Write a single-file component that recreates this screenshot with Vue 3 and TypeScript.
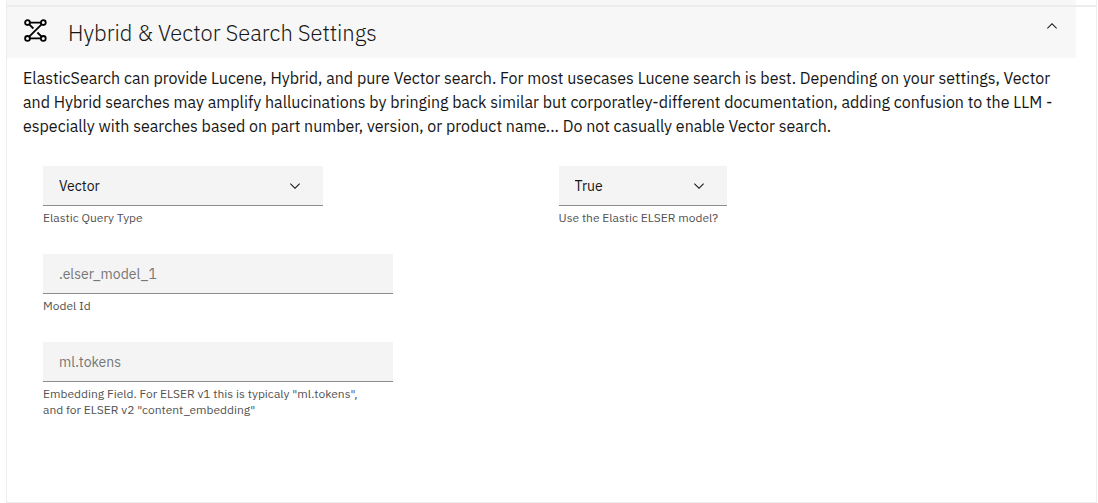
<script setup lang="ts">
import { ref } from 'vue'

const queryType = ref<string>('Vector')
const useElser = ref<string>('True')
const modelId = ref<string>('')
const embeddingField = ref<string>('')
const open = ref<boolean>(true)

const intro: string[] = [
  'ElasticSearch can provide Lucene, Hybrid, and pure Vector search. For most usecases Lucene search is best. Depending on your settings, Vector',
  'and Hybrid searches may amplify hallucinations by bringing back similar but corporatley-different documentation, adding confusion to the LLM -',
  'especially with searches based on part number, version, or product name... Do not casually enable Vector search.',
]
</script>

<template>
  <main class="page">
    <div class="previous"><div class="previous-bar"></div></div>
    <section class="panel">
      <header class="bar">
        <svg class="logo" viewBox="0 0 24 24" aria-hidden="true">
          <g fill="none" stroke="#000" stroke-width="1.8">
            <circle cx="4.5" cy="4.6" r="2.4" />
            <circle cx="20.3" cy="4.6" r="2.4" />
            <circle cx="4.5" cy="20.4" r="2.4" />
            <circle cx="20.3" cy="20.4" r="2.4" />
            <path d="M6.9 4.6H17.9M6.9 20.4H17.9M18.6 6.3L6.2 18.7M6.2 6.3L10.4 10.5M14.4 14.5L18.6 18.7" />
          </g>
        </svg>
        <h2 class="title">Hybrid &amp; Vector Search Settings</h2>
        <button class="toggle" type="button" aria-label="Toggle section" :aria-expanded="open" @click="open = !open">
          <svg viewBox="0 0 16 16" aria-hidden="true"><path d="M8 5l5 5-.7.7L8 6.4l-4.3 4.3L3 10z" fill="#161616" /></svg>
        </button>
      </header>
      <div v-if="open" class="content">
        <p class="intro"><span v-for="line in intro" :key="line" class="line">{{ line }}</span></p>
        <form class="fields" @submit.prevent>
          <div class="field">
            <div class="select-wrap wide">
              <select id="query-type" v-model="queryType" class="control">
                <option>Vector</option>
                <option>Hybrid</option>
                <option>Lucene</option>
              </select>
              <svg class="chevron" viewBox="0 0 16 16" aria-hidden="true"><path d="M8 11L3 6l.7-.7L8 9.6l4.3-4.3.7.7z" fill="#161616" /></svg>
            </div>
            <label class="help" for="query-type">Elastic Query Type</label>
          </div>
          <div class="field">
            <div class="select-wrap narrow">
              <select id="use-elser" v-model="useElser" class="control">
                <option>True</option>
                <option>False</option>
              </select>
              <svg class="chevron" viewBox="0 0 16 16" aria-hidden="true"><path d="M8 11L3 6l.7-.7L8 9.6l4.3-4.3.7.7z" fill="#161616" /></svg>
            </div>
            <label class="help" for="use-elser">Use the Elastic ELSER model?</label>
          </div>
          <div class="field full">
            <input id="model-id" v-model="modelId" class="control text" type="text" placeholder=".elser_model_1" />
            <label class="help" for="model-id">Model Id</label>
          </div>
          <div class="field full">
            <input id="embedding-field" v-model="embeddingField" class="control text" type="text" placeholder="ml.tokens" />
            <label class="help" for="embedding-field">Embedding Field. For ELSER v1 this is typicaly "ml.tokens",<br />and for ELSER v2 "content_embedding"</label>
          </div>
        </form>
      </div>
    </section>
  </main>
</template>

<style>
body {
  background: #fff;
}
</style>

<style scoped>
.page {
  padding: 0 1px 0 6px;
  color: #161616;
  font-family: "IBM Plex Sans", Roboto, "Liberation Sans", sans-serif;
}
.previous,
.panel {
  border: 1px solid #ededed;
}
.previous {
  border-top: 0;
}
.previous-bar {
  height: 5px;
  margin-right: 20px;
  background: #f7f7f7;
}
.bar {
  display: flex;
  align-items: flex-start;
  box-sizing: border-box;
  height: 51px;
  margin-right: 20px;
  padding: 11px 16px 0;
  background: #f7f7f7;
}
.logo {
  width: 24px;
  height: 24px;
}
.title {
  flex: 1;
  margin: 0 0 0 21px;
  font-family: "IBM Plex Sans Light", "IBM Plex Sans", Roboto, "Liberation Sans", sans-serif;
  font-size: 22px;
  line-height: 30px;
  font-weight: 300;
}
.toggle {
  display: flex;
  padding: 0;
  border: 0;
  background: none;
}
.toggle svg,
.chevron {
  width: 16px;
  height: 16px;
}
.content {
  padding: 8px 16px 84px;
}
.intro {
  margin: 0;
  font-size: 16px;
  line-height: 24px;
}
.line {
  display: block;
}
.fields {
  display: grid;
  grid-template-columns: 1fr 1fr;
  gap: 28px 14px;
  margin-top: 28px;
  padding: 0 20px;
}
.field {
  display: flex;
  flex-direction: column;
  align-items: flex-start;
}
.full {
  grid-column: 1 / -1;
}
.select-wrap {
  display: grid;
  align-items: center;
}
.select-wrap > * {
  grid-area: 1 / 1;
}
.wide {
  width: 280px;
}
.narrow {
  width: 168px;
}
.chevron {
  justify-self: end;
  margin-right: 20px;
  pointer-events: none;
}
.control {
  box-sizing: border-box;
  width: 100%;
  height: 40px;
  padding: 0 16px;
  border: 0;
  border-bottom: 1px solid #8d8d8d;
  border-radius: 0;
  outline: 0;
  background: #f4f4f4;
  color: #161616;
  font-family: inherit;
  font-size: 14px;
  appearance: none;
}
.control:focus-visible {
  outline: 2px solid #0f62fe;
  outline-offset: -2px;
}
.text {
  width: 350px;
}
.text::placeholder {
  color: #767676;
  opacity: 1;
}
.help {
  margin-top: 4px;
  color: #525252;
  font-size: 12px;
  line-height: 16px;
}
</style>
